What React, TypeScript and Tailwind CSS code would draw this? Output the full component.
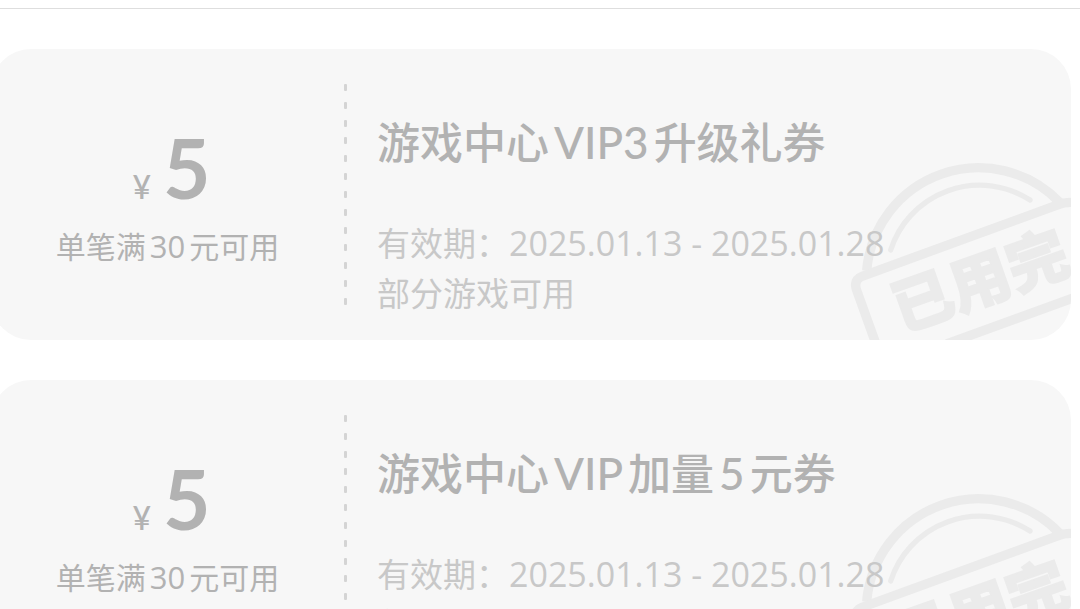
type Coupon = {
  id: string;
  amount: string;
  threshold: string;
  title: string;
  validity: string;
  scope: string;
};

const coupons: Coupon[] = [
  {
    id: "vip3",
    amount: "5",
    threshold: "单笔满30元可用",
    title: "游戏中心VIP3升级礼券",
    validity: "2025.01.13 - 2025.01.28",
    scope: "部分游戏可用",
  },
  {
    id: "bonus",
    amount: "5",
    threshold: "单笔满30元可用",
    title: "游戏中心VIP加量5元券",
    validity: "2025.01.13 - 2025.01.28",
    scope: "部分游戏可用",
  },
];

/** Sets Latin runs slightly larger and apart from the Chinese around them. */
function MixedText({ text, latinClass }: { text: string; latinClass: string }) {
  return (
    <>
      {text.split(/([A-Z0-9]+)/).map((part, i) =>
        i % 2 === 1 ? (
          <span key={i} className={latinClass}>
            {part}
          </span>
        ) : (
          part
        ),
      )}
    </>
  );
}

function Perforation() {
  return (
    <div className="my-[35px] flex w-[3px] shrink-0 flex-col justify-between" aria-hidden="true">
      {Array.from({ length: 13 }, (_, i) => (
        <span key={i} className="h-[7px] w-full rounded-[1px] bg-[#d4d4d4]" />
      ))}
    </div>
  );
}

function UsedStamp() {
  return (
    <svg
      viewBox="0 0 693 600"
      className="absolute right-0 bottom-0 h-[200px] w-[231px]"
      fill="none"
      stroke="#ebebeb"
    >
      <path d="M80 392A337 337 0 0 1 660 188" strokeWidth="28" />
      <path d="M152 330A280 280 0 0 1 570 180" strokeWidth="16" strokeLinecap="round" />
      <path d="M108 612L49 448Q40 419 68 408L655 194Q672 187 700 187" strokeWidth="28" />
      <path d="M320 612L710 470" strokeWidth="28" />
      <text
        transform="translate(420 423) rotate(-19.5)"
        y="66"
        textAnchor="middle"
        fontSize="182"
        fill="#ebebeb"
        stroke="#ebebeb"
        strokeWidth="5"
        className="font-['Noto_Sans_CJK_SC',sans-serif] font-black"
      >
        已用完
      </text>
    </svg>
  );
}

function CouponCard({ coupon }: { coupon: Coupon }) {
  return (
    <li className="relative flex h-[291px] overflow-hidden rounded-[40px] bg-[#f7f7f7]">
      <UsedStamp />
      <div className="flex w-[353px] shrink-0 flex-col items-center pt-[68px] text-[#b2b2b2]">
        <p className="flex items-baseline gap-3 pl-2 font-['Lato',sans-serif] leading-[100px]">
          <span className="text-[32px] font-medium">¥</span>
          <span className="text-[82px] font-bold">{coupon.amount}</span>
        </p>
        <p className="-mt-4 text-[30px] leading-[50px]">
          <MixedText text={coupon.threshold} latinClass="mx-1 text-[31px]" />
        </p>
      </div>
      <Perforation />
      <div className="relative flex-1 pt-[63px] pl-[30px] text-[#c8c8c8]">
        <h2 className="text-[43px] leading-[60px] font-medium whitespace-nowrap text-[#b2b2b2]">
          <MixedText
            text={coupon.title}
            latinClass="mx-[5px] font-['Lato',sans-serif] text-[44px]"
          />
        </h2>
        <p className="mt-[45px] text-[33px] leading-[50px] whitespace-nowrap">
          有效期：<span className="text-[34px]">{coupon.validity}</span>
        </p>
        <p className="text-[33px] leading-[50px]">{coupon.scope}</p>
      </div>
    </li>
  );
}

export default function App() {
  return (
    <main className="h-screen overflow-hidden bg-white pt-2 font-['Open_Sans','Noto_Sans_CJK_SC',sans-serif]">
      <hr className="border-t border-[#dedede]" />
      <ul className="mt-10 mr-[9px] -ml-[9px] flex flex-col gap-10">
        {coupons.map((coupon) => (
          <CouponCard key={coupon.id} coupon={coupon} />
        ))}
      </ul>
    </main>
  );
}
